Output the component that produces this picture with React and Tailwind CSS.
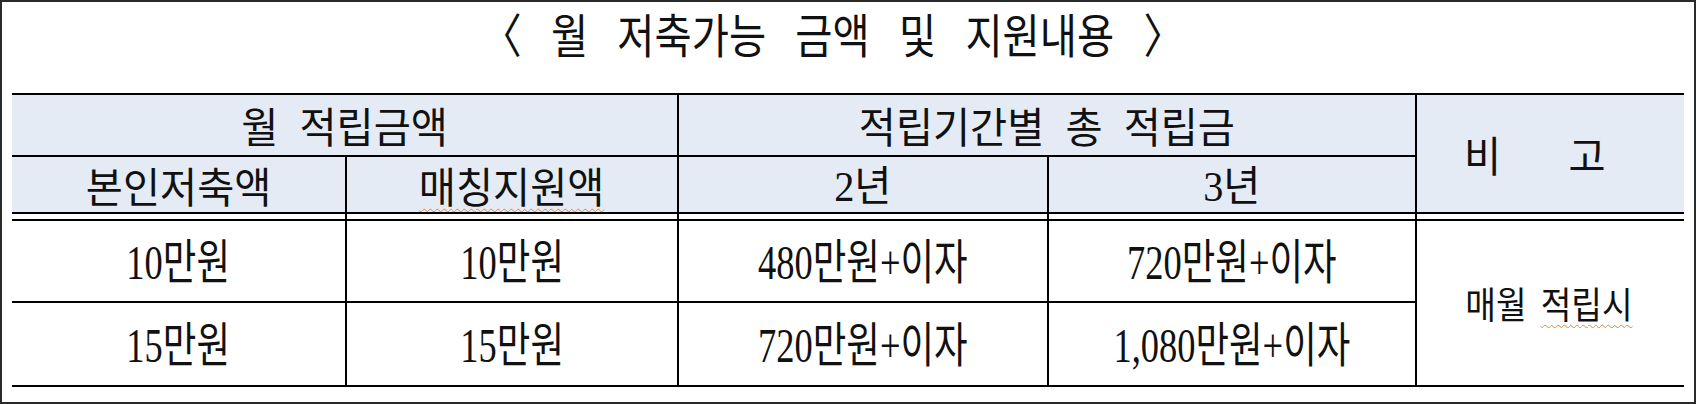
import React from "react";

const sans = "font-['Noto_Sans_CJK_KR','Noto_Sans',sans-serif]";
const serif = "font-['Liberation_Serif','Noto_Sans_CJK_KR',serif]";

function HeadCell({ children, className = "" }) {
  return (
    <div className={`flex items-center justify-center bg-[#e5ebf5] ${className}`}>
      {children}
    </div>
  );
}

function BodyCell({ children, className = "" }) {
  return (
    <div className={`flex items-center justify-center bg-white ${className}`}>
      {children}
    </div>
  );
}

function HText({ children, className = "" }) {
  return (
    <span
      className={`inline-block whitespace-pre ${sans} text-[42px] leading-none text-[#111] scale-x-[0.96] [word-spacing:0.3em] ${className}`}
    >
      {children}
    </span>
  );
}

function NText({ children }) {
  return (
    <span
      className={`inline-block whitespace-pre ${serif} text-[48px] leading-none text-[#111] scale-x-[0.76] translate-y-[2px]`}
    >
      {children}
    </span>
  );
}

export default function App() {
  return (
    <div className="w-[1696px] h-[404px] bg-white border-2 border-[#2a2a2a] px-[10px] flex flex-col">
      <div className="h-[91px] flex items-center justify-center pr-[30px]">
        <span
          className={`inline-block whitespace-pre ${sans} text-[47px] leading-none text-[#111] scale-x-[0.86] [word-spacing:0.5em] -translate-y-[15px]`}
        >
          〈 월 저축가능 금액 및 지원내용 〉
        </span>
      </div>
      <div className="grid grid-cols-[333px_330px_368px_366px_267px] grid-rows-[60px_55px_5px_80px_82px] gap-[2px] bg-black py-[2px]">
        <HeadCell className="col-span-2">
          <HText>월 적립금액</HText>
        </HeadCell>
        <HeadCell className="col-span-2">
          <HText className="scale-x-[0.92]">적립기간별 총 적립금</HText>
        </HeadCell>
        <HeadCell className="row-span-2">
          <HText className="[word-spacing:1.45em] -translate-x-[16px]">비 고</HText>
        </HeadCell>

        <HeadCell>
          <HText>본인저축액</HText>
        </HeadCell>
        <HeadCell>
          <HText className="underline decoration-wavy decoration-[#e8873a] decoration-1 underline-offset-[5px]">
            매칭지원액
          </HText>
        </HeadCell>
        <HeadCell>
          <HText>
            <span className={serif}>2</span>년
          </HText>
        </HeadCell>
        <HeadCell>
          <HText>
            <span className={serif}>3</span>년
          </HText>
        </HeadCell>

        <div className="bg-white" />
        <div className="bg-white" />
        <div className="bg-white" />
        <div className="bg-white" />
        <div className="bg-white" />

        <BodyCell>
          <NText>10만원</NText>
        </BodyCell>
        <BodyCell>
          <NText>10만원</NText>
        </BodyCell>
        <BodyCell>
          <NText>480만원+이자</NText>
        </BodyCell>
        <BodyCell>
          <NText>720만원+이자</NText>
        </BodyCell>
        <BodyCell className="row-span-2">
          <span
            className={`inline-block whitespace-pre ${sans} text-[37px] leading-none text-[#111] scale-x-[0.9] [word-spacing:0.2em] -translate-x-[2px]`}
          >
            매월{" "}
            <span className="underline decoration-wavy decoration-[#e8873a] decoration-1 underline-offset-[5px]">
              적립시
            </span>
          </span>
        </BodyCell>

        <BodyCell>
          <NText>15만원</NText>
        </BodyCell>
        <BodyCell>
          <NText>15만원</NText>
        </BodyCell>
        <BodyCell>
          <NText>720만원+이자</NText>
        </BodyCell>
        <BodyCell>
          <NText>1,080만원+이자</NText>
        </BodyCell>
      </div>
    </div>
  );
}
